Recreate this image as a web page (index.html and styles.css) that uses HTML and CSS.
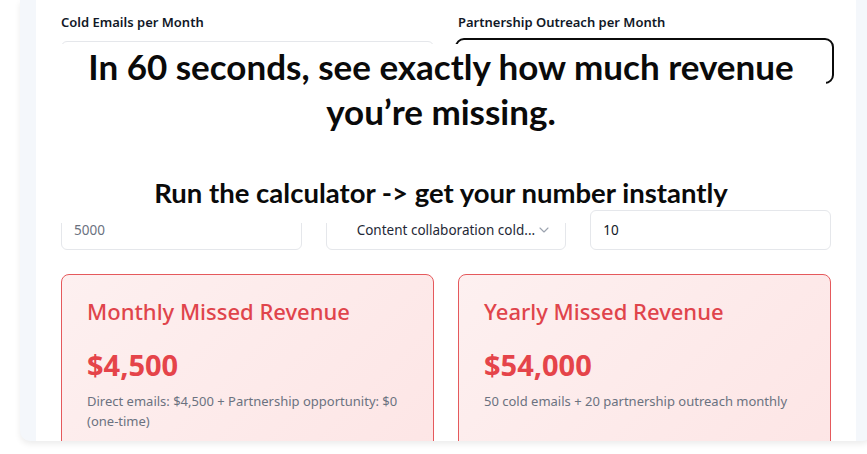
FILE: index.html
```html
<!DOCTYPE html>
<html lang="en">
<head>
<meta charset="utf-8">
<title>Missed Revenue Calculator</title>
<link rel="stylesheet" href="styles.css">
</head>
<body>
<div class="frame">
  <div class="panel">
    <div class="row two">
      <div class="field">
        <label class="label">Cold Emails per Month</label>
        <div class="input"></div>
      </div>
      <div class="field">
        <label class="label">Partnership Outreach per Month</label>
        <div class="input focused"></div>
      </div>
    </div>
    <div class="row three">
      <div class="input muted">5000</div>
      <div class="input select">
        <span>Content collaboration cold...</span>
        <svg class="chev" width="10" height="6" viewBox="0 0 10 6"><path d="M1 1l4 4 4-4" fill="none" stroke="#9ca3af" stroke-width="1.1" stroke-linecap="round" stroke-linejoin="round"/></svg>
      </div>
      <div class="input">10</div>
    </div>
    <div class="row two cards">
      <div class="card">
        <div class="card-title">Monthly Missed Revenue</div>
        <div class="card-amount">$4,500</div>
        <div class="card-desc">Direct emails: $4,500 + Partnership opportunity: $0 (one-time)</div>
      </div>
      <div class="card">
        <div class="card-title">Yearly Missed Revenue</div>
        <div class="card-amount">$54,000</div>
        <div class="card-desc">50 cold emails + 20 partnership outreach monthly</div>
      </div>
    </div>
    <div class="overlay">
      <p class="headline">In 60 seconds, see exactly how much revenue<br>you’re missing.</p>
      <p class="subline">Run the calculator -&gt; get your number instantly</p>
    </div>
  </div>
</div>
</body>
</html>
```
FILE: styles.css
```css
* { box-sizing: border-box; }
html, body { margin: 0; padding: 0; }
body {
  background: #ffffff;
  font-family: "Noto Sans", "Open Sans", sans-serif;
  width: 867px;
  height: 454px;
  overflow: hidden;
}
.frame {
  margin-left: 20px;
  width: 852px;
  height: 441px;
  padding: 0 16px;
  background: #f4f7fb;
  border-radius: 0 0 10px 10px;
  box-shadow: 0 3px 6px rgba(0, 0, 0, 0.08);
  overflow: hidden;
}
.panel {
  position: relative;
  background: #ffffff;
  height: 100%;
  padding: 13px 25px 0 25px;
}
.row { display: grid; column-gap: 24px; }
.row.two { grid-template-columns: 1fr 1fr; }
.row.three { grid-template-columns: 1fr 1fr 1fr; margin-top: 129px; }
.row.cards { margin-top: 24px; }
.field { display: flex; flex-direction: column; gap: 10px; }
.label {
  font-size: 13px;
  line-height: 18px;
  font-weight: 600;
  color: #111827;
}
.input {
  height: 40px;
  border: 1px solid #e5e7eb;
  border-radius: 6px;
  background: #fff;
  display: flex;
  align-items: center;
  padding: 0 12px;
  font-size: 13.5px;
  color: #111827;
}
.input.muted { color: #6b7280; }
.input.focused {
  outline: 2px solid #0b0b0b;
  outline-offset: 1px;
  border-color: #fff;
}
.input.select {
  padding: 0 16px 0 30px;
  justify-content: space-between;
  color: #1f2937;
}
.chev { display: block; }
.card {
  height: 200px;
  border: 1px solid #e5595c;
  border-radius: 8px;
  background: linear-gradient(135deg, #fdf0f0 0%, #fde5e5 100%);
  padding: 21px 25px 0 25px;
}
.card-title {
  font-size: 22px;
  line-height: 30px;
  color: #e0444b;
  font-weight: 500;
}
.card-amount {
  margin-top: 21px;
  font-size: 29px;
  line-height: 36px;
  font-weight: 700;
  color: #e5444a;
}
.card-desc {
  margin-top: 8px;
  font-size: 13px;
  line-height: 20px;
  color: #6b7280;
}
.overlay {
  position: absolute;
  left: 20px;
  top: 44px;
  width: 770px;
  height: 166px;
  background: #ffffff;
  text-align: center;
  font-family: "Lato", sans-serif;
  font-weight: 700;
  color: #0a0a0a;
}
.overlay::after {
  content: "";
  position: absolute;
  left: 0;
  top: 100%;
  width: 520px;
  height: 13px;
  background: #ffffff;
}
.headline {
  margin: 0;
  font-size: 35px;
  line-height: 45px;
}
.subline {
  margin: 43px 0 0 0;
  font-size: 27.5px;
  line-height: 32px;
}
```
